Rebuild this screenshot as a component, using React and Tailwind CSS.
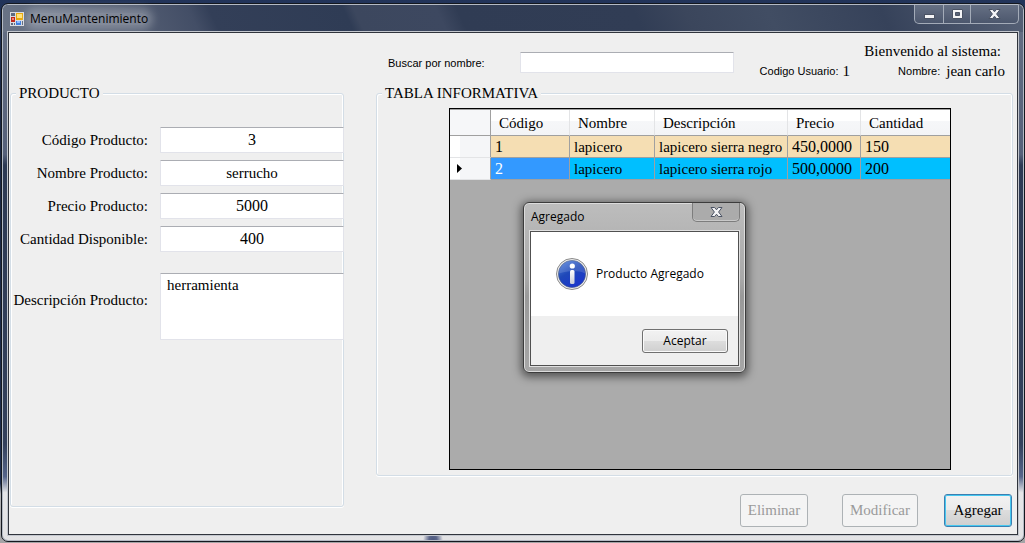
import React from "react";

const sansUi = "font-['Open_Sans','Noto_Sans',sans-serif]";
const smallLabel = "font-['Liberation_Sans',Arial,sans-serif] text-[11px] leading-5";

const fields = [
  { id: "codigo", label: "Código Producto:", value: "3", numeric: true },
  { id: "nombre", label: "Nombre Producto:", value: "serrucho", numeric: false },
  { id: "precio", label: "Precio Producto:", value: "5000", numeric: true },
  { id: "cantidad", label: "Cantidad Disponible:", value: "400", numeric: true },
];

const columns = [
  { name: "Código", numeric: true },
  { name: "Nombre", numeric: false },
  { name: "Descripción", numeric: false },
  { name: "Precio", numeric: true },
  { name: "Cantidad", numeric: true },
];

const rows = [
  ["1", "lapicero", "lapicero sierra negro", "450,0000", "150"],
  ["2", "lapicero", "lapicero sierra rojo", "500,0000", "200"],
];

const inputClass =
  "min-w-0 rounded-[1px] border border-[#e2e3ea] border-t-[#abadb3] bg-white outline-none";

const plainButton =
  "h-[33px] rounded-[3px] border border-[#adb2b5] bg-[#f4f4f4] text-[15px] text-[#9a9a9a]";

function AppIcon() {
  return (
    <svg width="14" height="14" viewBox="0 0 14 14" aria-hidden="true" className="shrink-0">
      <rect width="14" height="14" fill="#d9dce2" />
      <rect x="1" y="1" width="4" height="3" fill="#5d6a80" />
      <rect x="1" y="5" width="4" height="5" fill="#c0281c" />
      <rect x="2" y="6" width="2" height="2" fill="#f08070" />
      <rect x="6" y="1" width="7" height="7" fill="#e8a80c" />
      <rect x="7" y="2" width="5" height="4" fill="#ffe27a" />
      <rect x="6" y="9" width="5" height="4" fill="#3f7fe0" />
      <rect x="7" y="9" width="3" height="2" fill="#8fbcff" />
      <rect x="12" y="9" width="1" height="4" fill="#5d6a80" />
      <rect x="1" y="11" width="2" height="2" fill="#5d6a80" />
      <rect x="4" y="11" width="1" height="2" fill="#5d6a80" />
    </svg>
  );
}

function CloseGlyph() {
  return (
    <svg width="15" height="12" viewBox="0 0 15 12" aria-hidden="true">
      <path
        d="M2 1.5h3.6l1.9 2.3 1.9-2.3H13L9.6 6l3.4 4.5H9.4L7.5 8.2l-1.9 2.3H2L5.4 6z"
        fill="#f4f4f6"
        stroke="#4b5364"
        strokeWidth="1"
      />
    </svg>
  );
}

function InfoIcon() {
  return (
    <svg width="32" height="32" viewBox="0 0 32 32" aria-hidden="true" className="shrink-0">
      <defs>
        <linearGradient id="infoBlue" x1="0" y1="0" x2="0.6" y2="1">
          <stop offset="0" stopColor="#5585de" />
          <stop offset="0.5" stopColor="#1f48b8" />
          <stop offset="1" stopColor="#1a36cc" />
        </linearGradient>
        <linearGradient id="infoStem" x1="0" y1="0" x2="0" y2="1">
          <stop offset="0" stopColor="#ffffff" />
          <stop offset="1" stopColor="#c8ccd8" />
        </linearGradient>
      </defs>
      <circle cx="16" cy="16" r="15.5" fill="#eeeeee" stroke="#8a8a8a" strokeWidth="1" />
      <circle cx="16" cy="16" r="13.6" fill="url(#infoBlue)" stroke="#4a5a80" strokeWidth="0.6" />
      <path d="M3 15.5a13 13 0 0 1 26 0c-7-3.500-17-3-26 0z" fill="#ffffff" opacity="0.14" />
      <circle cx="16.300" cy="8" r="2.600" fill="#ffffff" />
      <rect x="14" y="12" width="4.500" height="14" rx="1.500" fill="url(#infoStem)" />
    </svg>
  );
}

function TitleBar() {
  const divider = "flex items-center justify-center border-r border-[#a3abb8]";
  return (
    <header className="flex h-[27px] items-start justify-between rounded-t-[5px] bg-[linear-gradient(65deg,#6a7486_0%,#566075_12%,#434e66_19%,#333f58_21%,#2f3c55_34%,#3c475e_35%,#3d4860_43%,#303c54_45%,#313d55_62%,#3b465c_67%,#414d63_75%,#36425a_86%,#566176_100%)] pl-[7px]">
      <div className={`flex h-full items-center gap-[6px] text-xs text-black ${sansUi}`}>
        <AppIcon />
        <h1 className="rounded-full bg-white/25 leading-3 shadow-[0_0_8px_5px_rgba(255,255,255,0.25)]">
          MenuMantenimiento
        </h1>
      </div>
      <div className="mr-1 flex h-[19px] overflow-hidden rounded-b-[5px] border border-t-0 border-[#a3abb8] bg-gradient-to-b from-[#667084] to-[#4c576d]">
        <button type="button" aria-label="Minimizar" className={`w-[29px] ${divider}`}>
          <svg width="13" height="12" viewBox="0 0 13 12" aria-hidden="true">
            <rect x="1.500" y="6.500" width="10" height="4" fill="#f4f4f6" stroke="#4b5364" />
          </svg>
        </button>
        <button type="button" aria-label="Maximizar" className={`w-[27px] ${divider}`}>
          <svg width="13" height="12" viewBox="0 0 13 12" aria-hidden="true">
            <path
              d="M1.500 1.500h10v9h-10zM4.500 4.500v3h4v-3z"
              fill="#f4f4f6"
              fillRule="evenodd"
              stroke="#4b5364"
            />
          </svg>
        </button>
        <button type="button" aria-label="Cerrar" className="flex w-[47px] items-center justify-center">
          <CloseGlyph />
        </button>
      </div>
    </header>
  );
}

function GroupBox({ title, children }) {
  return (
    <fieldset className="flex min-w-0 flex-1 flex-col rounded-[3px] border border-[#d3dde6] shadow-[inset_1px_1px_0_#fff,inset_-1px_0_0_#fff,0_1px_0_#fff]">
      <legend className="ml-[5px] bg-[#efefef] px-[3px] leading-[18px]">{title}</legend>
      {children}
    </fieldset>
  );
}

function ProductForm() {
  return (
    <GroupBox title="PRODUCTO">
      <div className="-mr-px pt-[25px]">
        <div className="grid grid-cols-[137px_minmax(0,1fr)] items-center gap-x-3 gap-y-[7px]">
          {fields.map((f) => (
            <React.Fragment key={f.id}>
              <label htmlFor={f.id} className="text-right whitespace-nowrap">
                {f.label}
              </label>
              <input
                id={f.id}
                type="text"
                defaultValue={f.value}
                className={`h-[26px] text-center ${f.numeric ? "text-base" : ""} ${inputClass}`}
              />
            </React.Fragment>
          ))}
        </div>
        <div className="mt-[21px] grid grid-cols-[137px_minmax(0,1fr)] gap-x-3">
          <label htmlFor="descripcion" className="self-center pb-3 text-right whitespace-nowrap">
            Descripción Producto:
          </label>
          <textarea
            id="descripcion"
            defaultValue="herramienta"
            className={`h-[67px] resize-none px-[6px] py-0 ${inputClass}`}
          />
        </div>
      </div>
    </GroupBox>
  );
}

function SearchHeader() {
  return (
    <div className="flex items-center justify-between gap-[26px] pt-2 pr-2 pl-3">
      <div className="flex items-center gap-[35px]">
        <label htmlFor="buscar" className={`whitespace-nowrap ${smallLabel}`}>
          Buscar por nombre:
        </label>
        <input id="buscar" type="text" className={`h-[21px] w-[214px] ${inputClass}`} />
      </div>
      <div className="flex h-[43px] flex-1 flex-col leading-5 whitespace-nowrap">
        <p className="pr-1 text-right">Bienvenido al sistema:</p>
        <div className="flex justify-between">
          <p className="flex items-center gap-1">
            <span className={smallLabel}>Codigo Usuario:</span>
            <span>1</span>
          </p>
          <p className="flex items-center gap-[6px]">
            <span className={smallLabel}>Nombre:</span>
            <span>jean carlo</span>
          </p>
        </div>
      </div>
    </div>
  );
}

function ProductTable() {
  return (
    <table className="w-full table-fixed border-separate border-spacing-0 border-t border-[#a0a0a0] text-left leading-5">
      <colgroup>
        <col className="w-[41px]" />
        <col className="w-[79px]" />
        <col className="w-[85px]" />
        <col className="w-[133px]" />
        <col className="w-[73px]" />
        <col />
      </colgroup>
      <thead>
        <tr className="h-[26px] bg-[linear-gradient(#ffffff_0%,#ffffff_42%,#f6f7f9_43%,#f3f4f6_100%)]">
          <td className="border-r border-b border-[#a0a0a0] bg-[#f6f7f9] p-0" />
          {columns.map((c, i) => (
            <th
              key={c.name}
              scope="col"
              className={`border-b border-b-[#a0a0a0] py-0 pr-0 pl-2 font-normal ${
                i < columns.length - 1 ? "border-r border-r-[#e3e4e6]" : ""
              }`}
            >
              {c.name}
            </th>
          ))}
        </tr>
      </thead>
      <tbody>
        {rows.map((row, r) => (
          <tr key={row[0]} className={`h-[22px] ${r === 1 ? "bg-[#00bfff]" : "bg-[#f5deb3]"}`}>
            <td className="border-r border-b border-r-[#a0a0a0] border-b-[#e3e4e6] bg-[linear-gradient(90deg,#ffffff_25%,#f5f6f8_26%)] p-0">
              {r === 1 && (
                <svg width="5" height="9" viewBox="0 0 5 9" className="ml-[7px]" aria-label="Fila actual">
                  <path d="M0 0l5 4.500L0 9z" fill="#000" />
                </svg>
              )}
            </td>
            {row.map((cell, i) => (
              <td
                key={i}
                className={`border-b border-[#a0a0a0] py-0 pr-0 pl-1 whitespace-nowrap ${
                  columns[i].numeric ? "text-base leading-5" : ""
                } ${i < row.length - 1 ? "border-r" : ""} ${
                  r === 1 && i === 0 ? "bg-[#3399ff] text-white" : ""
                }`}
              >
                {cell}
              </td>
            ))}
          </tr>
        ))}
      </tbody>
    </table>
  );
}

function MessageDialog() {
  return (
    <div
      role="dialog"
      aria-labelledby="dialogTitle"
      className={`absolute top-[202px] left-[523px] w-[223px] rounded-[6px] border border-[#3c3c3c] bg-[linear-gradient(#bdbdbd_0%,#a8a8a8_45%,#999999_55%,#a6a6a6_100%)] px-[5px] pb-[5px] text-xs text-black shadow-[inset_0_0_0_1px_#dcdcdc,0_2px_9px_2px_rgba(0,0,0,0.5)] ${sansUi}`}
    >
      <div className="flex h-[27px] items-start justify-between pl-[2px]">
        <h2 id="dialogTitle" className="leading-[28px]">
          Agregado
        </h2>
        <button
          type="button"
          aria-label="Cerrar mensaje"
          className="flex h-[19px] w-[48px] items-center justify-center rounded-b-[5px] border border-t-0 border-[#7d7d7d] bg-[#ababab] shadow-[inset_0_-1px_0_#c9c9c9]"
        >
          <CloseGlyph />
        </button>
      </div>
      <div className="border border-[#e0e0e0]">
        <div className="border border-[#505050] bg-[#efefef]">
          <div className="flex h-[84px] items-center gap-2 bg-white pl-[25px]">
            <InfoIcon />
            <p>Producto Agregado</p>
          </div>
          <div className="flex justify-end px-[10px] pt-[13px] pb-3">
            <button
              type="button"
              className="h-6 w-[86px] rounded-[3px] border border-[#707070] bg-[linear-gradient(#f2f2f2_0%,#ebebeb_49%,#dddddd_50%,#cfcfcf_100%)] shadow-[inset_0_0_0_1px_#fafafa]"
            >
              Aceptar
            </button>
          </div>
        </div>
      </div>
    </div>
  );
}

export default function App() {
  return (
    <div className="relative flex min-h-screen flex-col bg-[linear-gradient(#22345a_0%,#1a2742_20%,#1e2d4d_89%,#b4b4b6_91%,#a4a4a6_100%)] pt-[3px] pb-px pl-px font-['Liberation_Serif','Times_New_Roman',serif] text-[15px] text-black">
      <main className="flex flex-1 flex-col rounded-[7px] border border-[#14181f] bg-[radial-gradient(ellipse_10px_16px_at_431px_100%,#4c587e_0%,#5c668a_40%,transparent_100%),linear-gradient(#667084_0%,#56617a_28%,#2d3a54_30%,#34415c_82%,#56658a_88%,#e6e6e8_91%,#e2e2e4_100%)] px-[5px] pb-[5px] shadow-[inset_0_0_0_1px_#b4bac4]">
        <div className="-mx-1 mt-px">
          <TitleBar />
        </div>
        <div className="-mt-px flex flex-1 flex-col border border-[#c3c7ce]">
          <div className="flex flex-1 gap-8 border border-[#30343c] bg-[#efefef] pr-1 pl-px">
            <section className="flex w-[334px] shrink-0 flex-col pt-[51px] pb-[27px]">
              <ProductForm />
            </section>
            <section className="flex min-w-0 flex-1 flex-col pb-[7px]">
              <SearchHeader />
              <GroupBox title="TABLA INFORMATIVA">
                <div className="flex flex-1 flex-col pt-[6px] pr-[61px] pb-[5px] pl-[72px]">
                  <div className="flex-1 border border-black bg-[#ababab]">
                    <ProductTable />
                  </div>
                </div>
              </GroupBox>
              <div className="flex justify-end gap-[26px] pt-[18px] pr-px">
                <div className="flex gap-[34px]">
                  <button type="button" disabled className={`w-[68px] ${plainButton}`}>
                    Eliminar
                  </button>
                  <button type="button" disabled className={`w-[76px] ${plainButton}`}>
                    Modificar
                  </button>
                </div>
                <button
                  type="button"
                  className="h-[33px] w-[68px] rounded-[3px] border border-[#3c7fb1] bg-[linear-gradient(#f2f2f2_0%,#ebebeb_49%,#dddddd_50%,#cfcfcf_100%)] text-[15px] shadow-[inset_0_0_0_1px_#46c8f0]"
                >
                  Agregar
                </button>
              </div>
            </section>
          </div>
        </div>
      </main>
      <MessageDialog />
    </div>
  );
}
